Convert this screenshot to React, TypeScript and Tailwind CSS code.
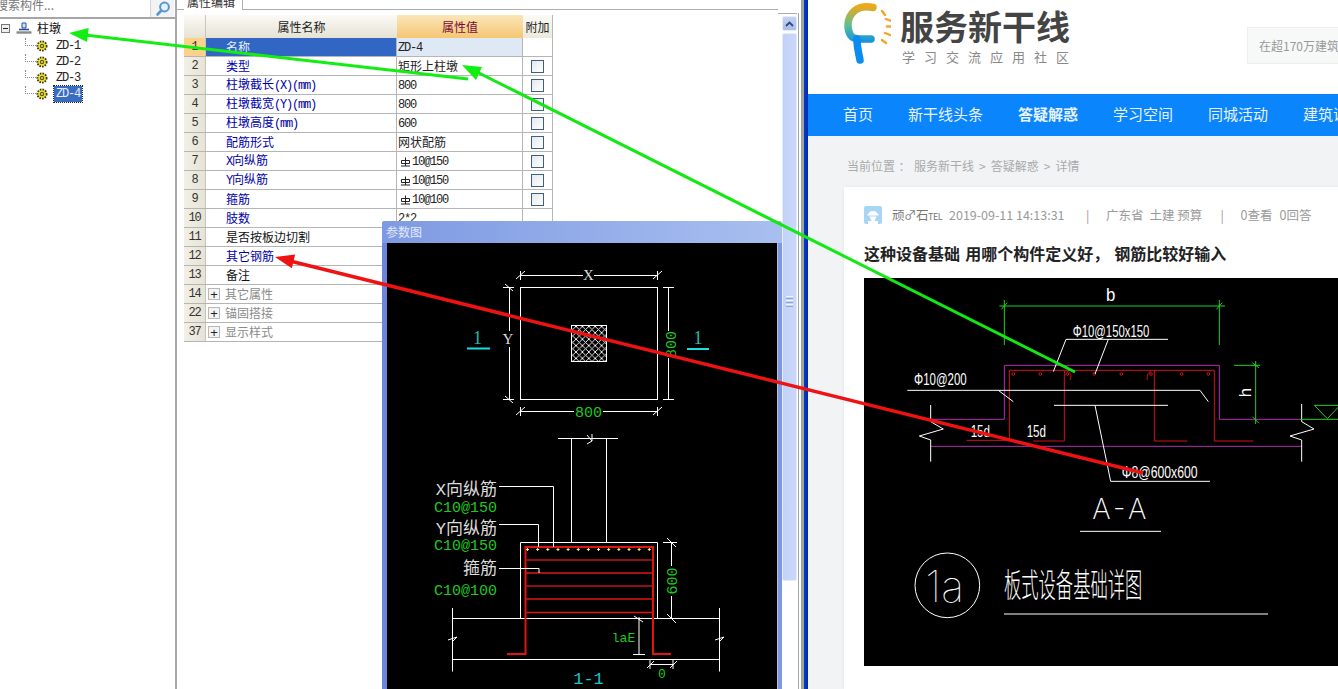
import React from "react";

const MONO = "font-['Liberation_Mono','Noto_Sans_CJK_SC',monospace]";

function Mix({ text }: { text: string }) {
  const parts = text.split(/([\x00-\x7f]+)/).filter(Boolean);
  return (
    <>
      {parts.map((p, i) =>
        /^[\x00-\x7f]+$/.test(p) ? (
          <span key={i} className="font-['Liberation_Mono',monospace] text-[12px] tracking-[-1.2px]">
            {p}
          </span>
        ) : (
          <span key={i} className="font-['Noto_Sans_CJK_SC',sans-serif] text-[12px]">
            {p}
          </span>
        )
      )}
    </>
  );
}

function Gear() {
  return (
    <svg width="12" height="12" viewBox="0 0 12 12" className="shrink-0">
      <circle cx="6" cy="6" r="4.6" fill="#f3e23a" stroke="#3a3a10" strokeWidth="1.8" strokeDasharray="1.6 1.1" />
      <circle cx="6" cy="6" r="2.2" fill="#5a5a10" />
      <circle cx="6" cy="6" r="0.9" fill="#fff36a" />
    </svg>
  );
}

function RebarMark() {
  return (
    <svg width="11" height="11" viewBox="0 0 11 11" className="mr-[1px] ml-[2px] shrink-0">
      <path d="M1.5 4.5 H9.5 V7.5 H1.5 Z M5.5 1.5 V10 M1 10 H10" fill="none" stroke="#222" strokeWidth="1" />
    </svg>
  );
}

function CheckBox() {
  return (
    <span className="block w-[13px] h-[13px] border border-[#3f5f7f] bg-gradient-to-br from-[#e4e8ee] to-[#ffffff]" />
  );
}

type Row = { n: number; name: string; val?: string; rebar?: boolean; blue?: boolean; check?: boolean; group?: boolean };

const rows: Row[] = [
  { n: 1, name: "名称", val: "ZD-4", blue: true },
  { n: 2, name: "类型", val: "矩形上柱墩", blue: true, check: true },
  { n: 3, name: "柱墩截长(X)(mm)", val: "800", blue: true, check: true },
  { n: 4, name: "柱墩截宽(Y)(mm)", val: "800", blue: true, check: true },
  { n: 5, name: "柱墩高度(mm)", val: "600", blue: true, check: true },
  { n: 6, name: "配筋形式", val: "网状配筋", blue: true, check: true },
  { n: 7, name: "X向纵筋", val: "10@150", rebar: true, blue: true, check: true },
  { n: 8, name: "Y向纵筋", val: "10@150", rebar: true, blue: true, check: true },
  { n: 9, name: "箍筋", val: "10@100", rebar: true, blue: true, check: true },
  { n: 10, name: "肢数", val: "2*2", blue: true },
  { n: 11, name: "是否按板边切割" },
  { n: 12, name: "其它钢筋", blue: true },
  { n: 13, name: "备注" },
  { n: 14, name: "其它属性", group: true },
  { n: 22, name: "锚固搭接", group: true },
  { n: 37, name: "显示样式", group: true },
];

function Table() {
  return (
    <div className="w-[369px] text-[12px] leading-none">
      <div className="flex h-[23px]">
        <div className="w-[22px] bg-gradient-to-b from-[#fbfaf6] to-[#e6e2d4] border-r border-[#c8c6ba]" />
        <div className="w-[191px] flex items-center justify-center bg-gradient-to-b from-[#fbfaf6] to-[#e6e2d4] font-['Noto_Sans_CJK_SC',sans-serif] text-[#222]">
          属性名称
        </div>
        <div className="w-[126px] flex items-center justify-center bg-gradient-to-b from-[#fbe6b8] to-[#f5c672] text-[#7a0b3a] font-['Noto_Sans_CJK_SC',sans-serif]">
          属性值
        </div>
        <div className="w-[30px] flex items-center justify-center bg-gradient-to-b from-[#fbfaf6] to-[#ece9dd] border-r border-[#b8b8b8] text-[#222] font-['Noto_Sans_CJK_SC',sans-serif]">
          附加
        </div>
      </div>
      {rows.map((r) => (
        <div key={r.n} className="flex h-[19px] border-b border-[#b5b5b5]">
          <div
            className={`w-[22px] flex items-center justify-center border-r border-[#c8c6ba] ${MONO} text-[12px] tracking-[-1.2px] ${
              r.n === 1 ? "bg-[#fcd28a] text-[#333]" : "bg-gradient-to-r from-[#f2f0e6] to-[#e6e3d6] text-[#333]"
            }`}
          >
            {r.n}
          </div>
          {r.group ? (
            <div className="w-[347px] flex items-center text-[#8a8a8a] border-r border-[#b5b5b5]">
              <span className="ml-[2px] w-[12px] h-[12px] border border-[#b8b8b8] bg-[#f4f4f4] flex items-center justify-center text-[#222] text-[13px] font-['Liberation_Sans',sans-serif]">
                +
              </span>
              <span className="ml-[5px] font-['Noto_Sans_CJK_SC',sans-serif]">{r.name}</span>
            </div>
          ) : (
            <>
              <div
                className={`w-[191px] flex items-center pl-[20px] border-r border-[#b5b5b5] ${
                  r.n === 1 ? "bg-[#3166c4] text-[#e8eefc]" : r.blue ? "text-[#0000a8]" : "text-[#111]"
                }`}
              >
                <span>
                  <Mix text={r.name} />
                </span>
              </div>
              <div
                className={`w-[126px] flex items-center pl-[1px] border-r border-[#b5b5b5] text-[#222] ${
                  r.n === 1 ? "bg-[#dfe8f5]" : ""
                }`}
              >
                {r.rebar && <RebarMark />}
                <span>{r.val && <Mix text={r.val} />}</span>
              </div>
              <div className="w-[30px] flex items-center justify-center border-r border-[#b5b5b5]">
                {r.check && <CheckBox />}
              </div>
            </>
          )}
        </div>
      ))}
    </div>
  );
}

function TreeChild({ label, selected }: { label: string; selected?: boolean }) {
  return (
    <div className="flex h-[16px] pl-[25px] items-center">
      <span className="self-start w-[11px] h-[8px] border-l border-b border-dotted border-[#888] shrink-0" />
      <Gear />
      <span
        className={`ml-[6px] px-[2px] h-[16px] flex items-center font-['Liberation_Mono',monospace] text-[12px] tracking-[-1.2px] ${
          selected ? "bg-[#3a6cc0] text-[#e8eefc] outline-1 outline-dotted outline-[#222]" : "text-[#222]"
        }`}
      >
        {label}
      </span>
    </div>
  );
}

function Tree() {
  return (
    <aside className="w-[177px] h-full shrink-0 border-r-[2px] border-[#a9a9a9] bg-white overflow-hidden">
      <div className="flex h-[19px] border-b-2 border-[#a6a6a6]">
        <div className="w-[150px] overflow-hidden text-[12px] leading-[12px] text-[#777] font-['Noto_Sans_CJK_SC',sans-serif] whitespace-nowrap -ml-[4px] -mt-[1px]">
          搜索构件...
        </div>
        <div className="w-[24px] ml-[4px] flex items-center justify-center bg-[#f1f3f6] border-l border-[#d4d4d4]">
          <svg width="16" height="16" viewBox="0 0 16 16">
            <circle cx="9.5" cy="6" r="4.4" fill="#e6f0fa" stroke="#5a96cc" strokeWidth="2" />
            <path d="M6.3 9.5 L2.5 13.5" stroke="#5a96cc" strokeWidth="2.6" strokeLinecap="round" />
          </svg>
        </div>
      </div>
      <div className="flex items-center h-[18px] pl-[1px]">
        <span className="w-[9px] h-[9px] border border-[#777] bg-[#eee] flex items-center justify-center">
          <span className="block w-[5px] h-[1px] bg-[#222]" />
        </span>
        <svg width="16" height="12" viewBox="0 0 16 12" className="ml-[6px] shrink-0">
          <path d="M6 1 H10 V6 H6 Z" fill="#cfe0f5" stroke="#27509a" />
          <path d="M3 7.5 H13" stroke="#27509a" strokeWidth="1.6" />
          <path d="M0.5 10.5 H15.5" stroke="#8a8a8a" strokeWidth="2.4" />
        </svg>
        <span className="ml-[5px] text-[12px] text-[#111] font-['Noto_Sans_CJK_SC',sans-serif]">柱墩</span>
      </div>
      <div className="mt-[1px]">
        <TreeChild label="ZD-1" />
        <TreeChild label="ZD-2" />
        <TreeChild label="ZD-3" />
        <TreeChild label="ZD-4" selected />
      </div>
    </aside>
  );
}

function Scrollbar() {
  return (
    <div className="w-[15px] h-full pt-[13px] shrink-0">
      <div className="-ml-[4px] pl-[4px] border-t border-[#a8b0b0] pt-[2px] flex flex-col">
        <div className="h-[15px] flex items-center justify-center bg-gradient-to-b from-[#c5d3f3] to-[#a9bde8] border border-[#e6ecfa] rounded-[2px]">
          <svg width="9" height="6" viewBox="0 0 9 6">
            <path d="M1 5 L4.5 1.5 L8 5" fill="none" stroke="#2c4a80" strokeWidth="1.8" />
          </svg>
        </div>
        <div className="h-[548px] mt-[2px] flex items-center justify-center bg-gradient-to-r from-[#c2d2f6] to-[#c9d8fa] border border-[#e4ebfb] rounded-[2px]">
          <div className="flex flex-col gap-[1px] w-[7px] mt-[-12px]">
            <span className="h-[1px] bg-[#f2f5fd]" />
            <span className="h-[1px] bg-[#8ea4d8]" />
            <span className="h-[1px] bg-[#f2f5fd]" />
            <span className="h-[1px] bg-[#8ea4d8]" />
            <span className="h-[1px] bg-[#f2f5fd]" />
            <span className="h-[1px] bg-[#8ea4d8]" />
          </div>
        </div>
      </div>
    </div>
  );
}

function Dim({ d, c = "#fff", w = 1 }: { d: string; c?: string; w?: number }) {
  return <path d={d} fill="none" stroke={c} strokeWidth={w} />;
}

function ParamDrawing() {
  const txt = { fontFamily: "'Liberation Mono','Noto Sans CJK SC',monospace" };
  const g = "#1fc81f";
  const dots = Array.from({ length: 13 }, (_, i) => 527.5 + i * 10.15);
  return (
    <svg width="390" height="446" viewBox="387 243 390 446" className="block" style={txt}>
      <defs>
        <pattern id="hatch" width="6.4" height="6.4" patternUnits="userSpaceOnUse">
          <path d="M0 0 L6.4 6.4 M6.4 0 L0 6.4" stroke="#fff" strokeWidth="0.9" />
        </pattern>
      </defs>
      <rect x="387" y="243" width="390" height="446" fill="#000" />
      <rect x="520.5" y="287.5" width="137" height="112" fill="none" stroke="#fff" />
      <Dim d="M520.5 271 V280 M516 279 L525 271 M657.5 271 V280 M653 279 L662 271 M520.5 275.5 H583 M594 275.5 H657.5" />
      <text x="588.5" y="280" fill="#ddd" fontSize="15" textAnchor="middle" fontFamily="'Liberation Serif',serif">X</text>
      <Dim d="M509.5 287.5 V331 M509.5 347 V399.5 M503 287.5 H514 M503 399.5 H514 M505 284 L513 291 M505 396 L513 403" />
      <text x="508" y="344" fill="#ddd" fontSize="15" textAnchor="middle" fontFamily="'Liberation Serif',serif">Y</text>
      <Dim d="M520.5 407 V416 M516 415 L525 407 M657.5 407 V416 M653 415 L662 407 M520.5 411.5 H574 M603 411.5 H657.5" />
      <text x="588.5" y="417" fill={g} fontSize="15" textAnchor="middle">800</text>
      <Dim d="M668.5 287.5 V331 M668.5 358 V399.5 M663 287.5 H674 M663 399.5 H674" />
      <text transform="translate(676 344.5) rotate(-90)" fill={g} fontSize="15" textAnchor="middle">800</text>
      <rect x="571.5" y="325.5" width="35" height="36" fill="url(#hatch)" stroke="#fff" />
      <text x="477.5" y="344" fill="#22b8b0" fontSize="18" textAnchor="middle" fontFamily="'Liberation Serif',serif">1</text>
      <path d="M467 348.5 H490" stroke="#18e0e0" strokeWidth="2" />
      <text x="698" y="344" fill="#22b8b0" fontSize="18" textAnchor="middle" fontFamily="'Liberation Serif',serif">1</text>
      <path d="M687 349 H709" stroke="#18e0e0" strokeWidth="2" />

      <Dim d="M558 438.5 H618 M571.5 438.5 V542.5 M606.5 438.5 V542.5 M587 435 L592 441 L587 444 M592 434 V441" />
      <Dim d="M520.5 618 V542.5 H657.5 V618" />
      <Dim d="M452.5 618.5 H719.5 M452.5 659.5 H719.5 M452.5 608 V671.5 M719.5 608 V671.5 M448 640 L457 637 L452 642 M715 640 L724 637 L719 642" />
      <path d="M507 654 H525.5 V547 H653 V654 H671" fill="none" stroke="#e01414" strokeWidth="2" />
      {[560, 573, 586, 599, 612.5].map((y) => (
        <path key={y} d={`M525 ${y} H653`} stroke={y === 560 || y === 586 ? "#b81818" : "#e01414"} strokeWidth="1.6" />
      ))}
      {dots.map((x) => (
        <path key={x} d={`M${x - 1.5} 549.5 H${x + 1.5} M${x} 548 V551`} stroke="#fff36a" strokeWidth="1" />
      ))}
      <Dim d="M499 486.5 H553.5 V547 M499 524.5 H538.5 V547 M499 568.5 H539 V573" />
      <g textAnchor="end">
        <text x="497" y="495" fill="#ddd" fontSize="17">X向纵筋</text>
        <text x="497" y="512" fill={g} fontSize="15">C10@150</text>
        <text x="497" y="534" fill="#ddd" fontSize="17">Y向纵筋</text>
        <text x="497" y="550" fill={g} fontSize="15">C10@150</text>
        <text x="497" y="574" fill="#ddd" fontSize="17">箍筋</text>
        <text x="497" y="595" fill={g} fontSize="15">C10@100</text>
      </g>
      <Dim d="M671.5 542.5 V566 M671.5 596 V618 M663 542.5 H677 M667 538 L676 547 M667 614 L676 623" />
      <text transform="translate(677 581) rotate(-90)" fill={g} fontSize="15" textAnchor="middle">600</text>
      <Dim d="M639 617 V655 M633 654.5 H645 M634 616 L643 622" />
      <text x="623.5" y="642" fill={g} fontSize="13" textAnchor="middle">laE</text>
      <Dim d="M650 664.5 H673 M650 660 V669 M673 660 V669 M647 668 L654 661 M670 668 L677 661" />
      <text x="662" y="678" fill={g} fontSize="13" textAnchor="middle">0</text>
      <text x="588.5" y="684" fill="#16c8d0" fontSize="17" textAnchor="middle">1-1</text>
    </svg>
  );
}

function ParamDialog() {
  return (
    <div className="absolute left-[382px] top-[221px] w-[400px] h-[468px] bg-gradient-to-r from-[#6e86da] to-[#7f96e2] rounded-t-[3px] pl-[5px] pr-[4px] flex flex-col overflow-hidden">
      <div className="h-[22px] -mx-[5px] px-[4px] flex items-center bg-gradient-to-r from-[#7e9ae2] to-[#a9bff0] text-[12px] text-[#e2e9fb] font-['Noto_Sans_CJK_SC',sans-serif]">
        参数图
      </div>
      <div className="border-r border-[#b8c0d8]">
        <ParamDrawing />
      </div>
    </div>
  );
}

function CadDrawing() {
  const g = "#20d020";
  const p = "#b030b0";
  const r = "#d01414";
  const narrow = { fontFamily: "'Liberation Sans','Noto Sans CJK SC',sans-serif" };
  return (
    <svg width="474" height="388" viewBox="12 -6 1422 1164" className="block bg-black" style={narrow}>
      <g fill="none" strokeWidth="3">
        <path d="M418 78 H1095 M433 60 V195 M1078 60 V195 M424 88 L442 68 M1069 88 L1087 68" stroke={g} />
        <path d="M212 418 H433 V256 H1078 V418 H1320 M212 499 H1325" stroke={p} />
        <path d="M320 481 H448 V271 H1063 V483 H1180 M520 483 H613 V271 M883 271 V483 H982" stroke={r} />
        {[460, 541, 622, 703, 784, 873, 965, 1045].map((x) => (
          <circle key={x} cx={x} cy={282} r="4" stroke={r} />
        ))}
        <path d="M862 300 C860 285 864 278 872 274 M630 300 C636 285 632 278 622 274" stroke={r} />
        <path d="M924 178 H618 L580 275 M745 178 L705 282 M142 331 H1020 L1045 365 M415 331 L460 365 M582 376 H924 M705 376 L752 604 H1050" stroke="#fff" />
        <path d="M1122 256 H1200 M1187 243 V432 M1177 248 L1197 264 M1177 410 L1197 430" stroke={g} />
        <path d="M212 375 V425 L250 447 L178 468 L212 480 V545 M1325 372 V425 L1362 447 L1290 468 L1325 480 V545" stroke="#fff" />
        <path d="M1363 376 H1434 M1363 376 L1402 416 L1440 376 M1320 418 H1434" stroke={g} />
        <path d="M660 754 H903 M432 1002 H1224" stroke="#fff" />
        <circle cx="262" cy="916" r="97" stroke="#fff" />
      </g>
      <g fill="#fff" fontWeight="400">
        <text x="738" y="62" fontSize="54" textLength="28" lengthAdjust="spacingAndGlyphs">b</text>
        <text x="638" y="170" fontSize="50" textLength="230" lengthAdjust="spacingAndGlyphs">Φ10@150x150</text>
        <text x="162" y="316" fontSize="50" textLength="158" lengthAdjust="spacingAndGlyphs">Φ10@200</text>
        <text x="785" y="595" fontSize="50" textLength="228" lengthAdjust="spacingAndGlyphs">Φ8@600x600</text>
        <text x="332" y="471" fontSize="52" textLength="58" lengthAdjust="spacingAndGlyphs">15d</text>
        <text x="500" y="471" fontSize="52" textLength="58" lengthAdjust="spacingAndGlyphs">15d</text>
        <text transform="translate(1172 352) rotate(-90)" fontSize="50">h</text>
        <text x="697" y="718" fontSize="84" textLength="162" lengthAdjust="spacing" fontWeight="200" fontFamily="Inter,sans-serif">A-A</text>
        <text y="966" fontSize="130" fontWeight="100" fontFamily="Inter,sans-serif">
          <tspan x="196">1</tspan>
          <tspan x="244">a</tspan>
        </text>
        <text x="432" y="952" fontSize="100" textLength="415" lengthAdjust="spacingAndGlyphs" fontWeight="200" fontFamily="'Noto Sans CJK SC',sans-serif">板式设备基础详图</text>
      </g>
    </svg>
  );
}

function Logo() {
  return (
    <svg width="48" height="66" viewBox="843 4 48 66" className="shrink-0">
      <defs>
        <linearGradient id="lg" gradientUnits="userSpaceOnUse" x1="0" y1="10" x2="0" y2="48">
          <stop offset="0" stopColor="#f0a818" />
          <stop offset="0.5" stopColor="#5fc090" />
          <stop offset="1" stopColor="#0a8cf0" />
        </linearGradient>
      </defs>
      <path
        d="M873 11.5 C857 8 848 18 848 29 C848 38 852 43 858 43 L871 43"
        fill="none"
        stroke="url(#lg)"
        strokeWidth="7.5"
        strokeLinecap="round"
      />
      <path d="M857 43 C857 52 859 58 860 64" fill="none" stroke="#0a8cf0" strokeWidth="7.5" strokeLinecap="round" />
      <path
        d="M882 15 L885 19 M886 23 L891 25 M887 30.5 L892 30.5 M885 37 L890 39 M882 44 L886 47"
        stroke="#f2a52a"
        strokeWidth="2.4"
        strokeLinecap="round"
      />
    </svg>
  );
}

function Avatar() {
  return (
    <svg width="18" height="18" viewBox="0 0 18 18" className="shrink-0">
      <rect width="18" height="18" rx="2" fill="#a9d5f5" />
      <path d="M4.5 8 C4.5 4 13.5 4 13.5 8 Z M3.5 8 H14.5 V9.5 H3.5 Z" fill="#fff" />
      <path d="M5.5 10.5 H12.5 L10.5 15 H14 V18 H4 V15 H7.5 Z" fill="#fff" />
    </svg>
  );
}

function Web() {
  const nav: [string, string][] = [
    ["首页", ""],
    ["新干线头条", ""],
    ["答疑解惑", "font-bold"],
    ["学习空间", ""],
    ["同城活动", ""],
    ["建筑课堂", ""],
  ];
  return (
    <section className="flex-1 h-full min-w-0 flex flex-col bg-[#f1f3f5] overflow-hidden font-['Noto_Sans_CJK_SC',sans-serif]">
      <header className="h-[94px] bg-white flex pl-[35px] shrink-0">
        <Logo />
        <div className="ml-[9px] w-[170px] shrink-0 pt-[6px]">
          <div className="text-[34px] leading-[40px] font-bold text-[#444] whitespace-nowrap">服务新干线</div>
          <div className="mt-[3px] text-[13px] leading-[16px] tracking-[9px] text-[#888] whitespace-nowrap pl-[2px]">
            学习交流应用社区
          </div>
        </div>
        <div className="ml-[177px] mt-[27px] h-[37px] w-[140px] shrink-0 flex items-center pl-[11px] bg-[#f7f8f8] border border-[#eeeeee] text-[12px] text-[#999] whitespace-nowrap">
          在超170万建筑
        </div>
      </header>
      <nav className="h-[42px] pb-[2px] bg-[#0a85fb] flex items-center gap-[35px] pl-[35px] text-[15px] text-[#e8f3ff] whitespace-nowrap shrink-0">
        {nav.map(([t, c]) => (
          <span key={t} className={c}>
            {t}
          </span>
        ))}
      </nav>
      <div className="h-[51px] pt-[9px] pl-[39px] flex items-center gap-[5px] text-[12px] text-[#aaa] whitespace-nowrap shrink-0">
        <span>当前位置</span>
        <span className="-mx-[1.5px]">：</span>
        <span>服务新干线</span>
        <span>&gt;</span>
        <span>答疑解惑</span>
        <span>&gt;</span>
        <span>详情</span>
      </div>
      <div className="ml-[36px] flex-1 bg-white pl-[20px] pt-[19px] w-[600px] shadow-[0_0_4px_rgba(0,0,0,0.05)]">
        <div className="flex items-center h-[18px] text-[12.5px] text-[#9a9a9a] whitespace-nowrap">
          <Avatar />
          <span className="ml-[10px] w-[57px] text-[#777] tracking-[-0.5px]">
            顽♂石<span className="text-[9px]">TEL</span>
          </span>
          <span className="w-[137px]">2019-09-11 14:13:31</span>
          <span className="w-[20px]">|</span>
          <span>广东省</span>
          <span className="ml-[6px] w-[71px]">土建 预算</span>
          <span className="w-[20px]">|</span>
          <span className="w-[39px]">0查看</span>
          <span>0回答</span>
        </div>
        <div className="mt-[17px] h-[24px] text-[16px] leading-[24px] font-bold text-[#222] whitespace-nowrap [word-spacing:1.5px]">
          这种设备基础 用哪个构件定义好， 钢筋比较好输入
        </div>
        <div className="mt-[13px]">
          <CadDrawing />
        </div>
      </div>
    </section>
  );
}

function Arrows() {
  return (
    <svg width="1338" height="689" className="absolute left-0 top-0 pointer-events-none">
      <path d="M468 79 L85 35" stroke="#12ee12" strokeWidth="3" />
      <path d="M1075 372 L477 72" stroke="#12e812" strokeWidth="3" />
      <path d="M1143 473 L290 261" stroke="#ee1212" strokeWidth="3.5" />
      <polygon points="69,33 88.7,28.1 87.1,42.1" fill="#12ee12" />
      <polygon points="462,65 482,67 476,80" fill="#12ee12" />
      <polygon points="275,257 295.2,254.6 291.8,268.2" fill="#ee1212" />
    </svg>
  );
}

export default function App() {
  return (
    <div className="relative w-[1338px] h-[689px] flex overflow-hidden bg-white">
      <Tree />
      <main className="w-[627px] h-full shrink-0 flex bg-white">
        <div className="w-[605px] shrink-0 flex flex-col pr-[4px]">
          <div className="h-[10px] border-b border-[#a8b0b0] flex pl-[7px] shrink-0">
            <div className="w-[59px] h-[10px] -mb-[1px] bg-white border-r border-[#a8b0b0] overflow-hidden text-[12px] leading-[12px] pl-[3px] text-[#333] font-['Noto_Sans_CJK_SC',sans-serif]">
              <span className="block -mt-[4px]">属性编辑</span>
            </div>
          </div>
          <div className="pl-[7px] pt-[5px]">
            <Table />
          </div>
        </div>
        <Scrollbar />
        <div className="w-[3px] h-full mt-[13px] border-l border-[#9fa8a8] shrink-0 ml-[1px]" />
        <div className="flex-1 border-r-[3px] border-[#9aa5a0] ml-[-1px]" />
      </main>
      <div className="w-[4px] h-full bg-gradient-to-r from-[#0a3cc8] to-[#0028a8] shrink-0" />
      <Web />
      <ParamDialog />
      <Arrows />
    </div>
  );
}
